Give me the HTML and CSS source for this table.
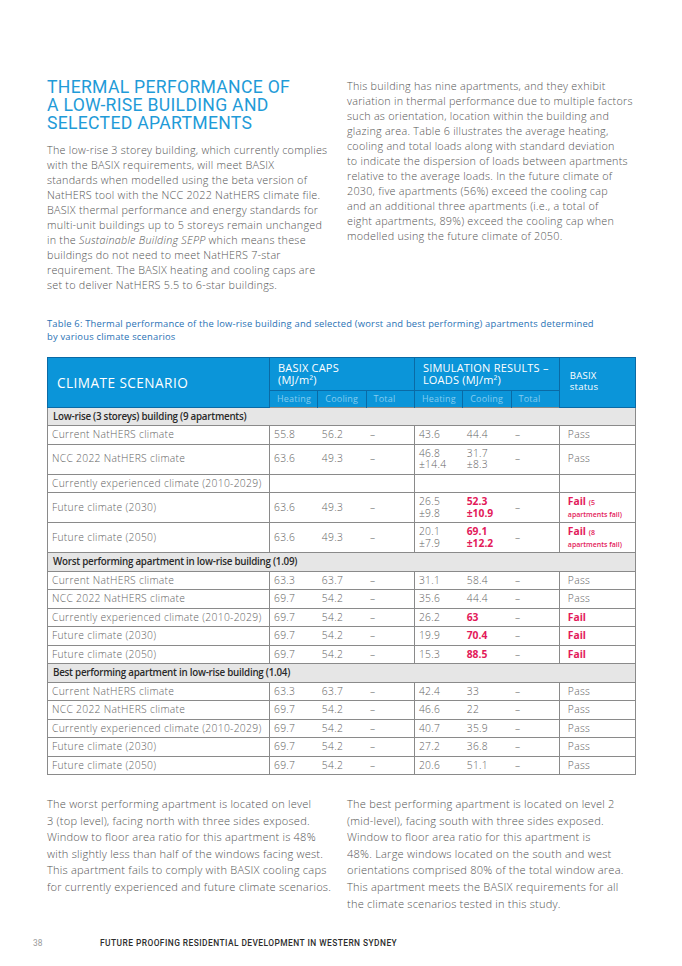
FILE: index.html
```html
<!DOCTYPE html>
<html lang="en">
<head>
<meta charset="utf-8">
<title>Thermal performance of a low-rise building</title>
<link rel="stylesheet" href="styles.css">
</head>
<body>
<div class="page">
  <section class="cols intro">
    <div class="col">
      <h1 class="title">THERMAL PERFORMANCE OF<br>A LOW-RISE BUILDING AND<br>SELECTED APARTMENTS</h1>
      <p class="text">The low-rise 3 storey building, which currently complies<br>with the BASIX requirements, will meet BASIX<br>standards when modelled using the beta version of<br>NatHERS tool with the NCC 2022 NatHERS climate file.<br>BASIX thermal performance and energy standards for<br>multi-unit buildings up to 5 storeys remain unchanged<br>in the <em>Sustainable Building SEPP</em> which means these<br>buildings do not need to meet NatHERS 7-star<br>requirement. The BASIX heating and cooling caps are<br>set to deliver NatHERS 5.5 to 6-star buildings.</p>
    </div>
    <div class="col">
      <p class="text">This building has nine apartments, and they exhibit<br>variation in thermal performance due to multiple factors<br>such as orientation, location within the building and<br>glazing area. Table 6 illustrates the average heating,<br>cooling and total loads along with standard deviation<br>to indicate the dispersion of loads between apartments<br>relative to the average loads. In the future climate of<br>2030, five apartments (56%) exceed the cooling cap<br>and an additional three apartments (i.e., a total of<br>eight apartments, 89%) exceed the cooling cap when<br>modelled using the future climate of 2050.</p>
    </div>
  </section>

  <p class="caption">Table 6: Thermal performance of the low-rise building and selected (worst and best performing) apartments determined<br>by various climate scenarios</p>

  <table class="data">
    <colgroup>
      <col class="c-scn"><col class="c-num"><col class="c-num"><col class="c-num"><col class="c-num"><col class="c-num"><col class="c-num"><col class="c-st">
    </colgroup>
    <thead>
      <tr class="h1">
        <th rowspan="2" class="h-scn">CLIMATE SCENARIO</th>
        <th colspan="3" class="h-grp">BASIX CAPS<br>(MJ/m²)</th>
        <th colspan="3" class="h-grp">SIMULATION RESULTS –<br>LOADS (MJ/m²)</th>
        <th rowspan="2" class="h-st">BASIX<br>status</th>
      </tr>
      <tr class="h2">
        <th>Heating</th><th>Cooling</th><th class="end">Total</th>
        <th>Heating</th><th>Cooling</th><th class="end">Total</th>
      </tr>
    </thead>
    <tbody>
      <tr class="grp"><td colspan="8">Low-rise (3 storeys) building (9 apartments)</td></tr>
      <tr><td class="scn">Current NatHERS climate</td><td>55.8</td><td>56.2</td><td class="end">–</td><td>43.6</td><td>44.4</td><td class="end">–</td><td class="st">Pass</td></tr>
      <tr><td class="scn">NCC 2022 NatHERS climate</td><td>63.6</td><td>49.3</td><td class="end">–</td><td>46.8<br>±14.4</td><td>31.7<br>±8.3</td><td class="end">–</td><td class="st">Pass</td></tr>
      <tr><td class="scn">Currently experienced climate (2010-2029)</td><td></td><td></td><td class="end"></td><td></td><td></td><td class="end"></td><td class="st"></td></tr>
      <tr><td class="scn">Future climate (2030)</td><td>63.6</td><td>49.3</td><td class="end">–</td><td>26.5<br>±9.8</td><td class="fail">52.3<br>±10.9</td><td class="end">–</td><td class="st fail">Fail <span class="note">(5<br>apartments fail)</span></td></tr>
      <tr><td class="scn">Future climate (2050)</td><td>63.6</td><td>49.3</td><td class="end">–</td><td>20.1<br>±7.9</td><td class="fail">69.1<br>±12.2</td><td class="end">–</td><td class="st fail">Fail <span class="note">(8<br>apartments fail)</span></td></tr>

      <tr class="grp"><td colspan="8">Worst performing apartment in low-rise building (1.09)</td></tr>
      <tr><td class="scn">Current NatHERS climate</td><td>63.3</td><td>63.7</td><td class="end">–</td><td>31.1</td><td>58.4</td><td class="end">–</td><td class="st">Pass</td></tr>
      <tr><td class="scn">NCC 2022 NatHERS climate</td><td>69.7</td><td>54.2</td><td class="end">–</td><td>35.6</td><td>44.4</td><td class="end">–</td><td class="st">Pass</td></tr>
      <tr><td class="scn">Currently experienced climate (2010-2029)</td><td>69.7</td><td>54.2</td><td class="end">–</td><td>26.2</td><td class="fail">63</td><td class="end">–</td><td class="st fail">Fail</td></tr>
      <tr><td class="scn">Future climate (2030)</td><td>69.7</td><td>54.2</td><td class="end">–</td><td>19.9</td><td class="fail">70.4</td><td class="end">–</td><td class="st fail">Fail</td></tr>
      <tr><td class="scn">Future climate (2050)</td><td>69.7</td><td>54.2</td><td class="end">–</td><td>15.3</td><td class="fail">88.5</td><td class="end">–</td><td class="st fail">Fail</td></tr>

      <tr class="grp"><td colspan="8">Best performing apartment in low-rise building (1.04)</td></tr>
      <tr><td class="scn">Current NatHERS climate</td><td>63.3</td><td>63.7</td><td class="end">–</td><td>42.4</td><td>33</td><td class="end">–</td><td class="st">Pass</td></tr>
      <tr><td class="scn">NCC 2022 NatHERS climate</td><td>69.7</td><td>54.2</td><td class="end">–</td><td>46.6</td><td>22</td><td class="end">–</td><td class="st">Pass</td></tr>
      <tr><td class="scn">Currently experienced climate (2010-2029)</td><td>69.7</td><td>54.2</td><td class="end">–</td><td>40.7</td><td>35.9</td><td class="end">–</td><td class="st">Pass</td></tr>
      <tr><td class="scn">Future climate (2030)</td><td>69.7</td><td>54.2</td><td class="end">–</td><td>27.2</td><td>36.8</td><td class="end">–</td><td class="st">Pass</td></tr>
      <tr><td class="scn">Future climate (2050)</td><td>69.7</td><td>54.2</td><td class="end">–</td><td>20.6</td><td>51.1</td><td class="end">–</td><td class="st">Pass</td></tr>
    </tbody>
  </table>

  <section class="cols outro">
    <p class="text">The worst performing apartment is located on level<br>3 (top level), facing north with three sides exposed.<br>Window to floor area ratio for this apartment is 48%<br>with slightly less than half of the windows facing west.<br>This apartment fails to comply with BASIX cooling caps<br>for currently experienced and future climate scenarios.</p>
    <p class="text">The best performing apartment is located on level 2<br>(mid-level), facing south with three sides exposed.<br>Window to floor area ratio for this apartment is<br>48%. Large windows located on the south and west<br>orientations comprised 80% of the total window area.<br>This apartment meets the BASIX requirements for all<br>the climate scenarios tested in this study.</p>
  </section>

  <footer class="foot">
    <span class="pg">38</span>
    <span class="doc">FUTURE PROOFING RESIDENTIAL DEVELOPMENT IN WESTERN SYDNEY</span>
  </footer>
</div>
</body>
</html>
```

FILE: styles.css
```css
html, body {
  margin: 0;
  padding: 0;
  background: #ffffff;
}

.page {
  width: 682px;
  height: 966px;
  box-sizing: border-box;
  padding: 78px 46px 0 47px;
  font-family: "Open Sans", "Liberation Sans", sans-serif;
  color: #5a5a5a;
}

.cols {
  display: grid;
  grid-template-columns: 283px 285px;
  column-gap: 17px;
}

.title {
  margin: 0;
  font-family: Roboto, "Liberation Sans", sans-serif;
  font-weight: 400;
  font-size: 17.6px;
  line-height: 18px;
  letter-spacing: 0.3px;
  color: #1f9bd8;
}

.text {
  margin: 0;
  font-size: 10.8px;
  line-height: 15px;
  font-weight: 300;
  letter-spacing: 0.24px;
  color: #555555;
  white-space: nowrap;
}

.intro .title + .text {
  margin-top: 10px;
}

.caption {
  margin: 25px 0 0;
  font-size: 9.4px;
  line-height: 13px;
  letter-spacing: 0.2px;
  color: #2a72b5;
  white-space: nowrap;
}

.data {
  margin-top: 14px;
  width: 588px;
  border-collapse: collapse;
  table-layout: fixed;
  font-size: 10.3px;
  letter-spacing: 0.3px;
  color: #636363;
}

.c-scn { width: 222px; }
.c-num { width: 48.3px; }
.c-st { width: 76px; }

.data th {
  background: #0b95d9;
  color: #ffffff;
  font-weight: 400;
  text-align: left;
  vertical-align: top;
  border: 1px solid #0a6aa5;
  letter-spacing: 0.2px;
}

.data .h1 th {
  height: 33px;
  box-sizing: border-box;
}

.h-scn {
  font-size: 13.6px;
  padding: 0 0 0 9px;
  vertical-align: middle !important;
  letter-spacing: 0.45px !important;
}

.h-grp {
  font-size: 11px;
  line-height: 12px;
  padding: 3.5px 6px 0 8px;
}

.h-st {
  font-size: 9.6px;
  line-height: 11.5px;
  padding: 0 0 2px 10px;
  vertical-align: middle !important;
}

.data .h2 th {
  font-size: 9px;
  line-height: 15.5px;
  padding: 0 0 0 7px;
  color: #86ccef;
  border-top: none;
  border-bottom: none;
}

.data td {
  padding: 3px 4px;
  line-height: 11.5px;
  vertical-align: middle;
  border-bottom: 1px solid #8a8a8a;
  font-weight: 300;
  white-space: nowrap;
  overflow: hidden;
}

.data td.scn {
  border-left: 1px solid #8a8a8a;
  border-right: 1px solid #8a8a8a;
  padding-left: 4px;
}

.data td.end { border-right: 1px solid #8a8a8a; }

.data td.st {
  border-right: 1px solid #8a8a8a;
  padding-left: 8px;
}

.data .grp td {
  background: #e6e6e6;
  color: #2a2a2a;
  font-size: 9.8px;
  font-weight: 600;
  letter-spacing: -0.25px;
  border: 1px solid #8a8a8a;
  padding-left: 5px;
}

.data td.fail {
  color: #e3195a;
  font-weight: 700;
  letter-spacing: 0;
}

.note {
  font-size: 7px;
  line-height: 9px;
  font-weight: 600;
}

.outro {
  margin-top: 21px;
}

.outro .text {
  font-size: 11.1px;
  line-height: 16.6px;
  letter-spacing: 0.2px;
}

.foot {
  display: flex;
  align-items: center;
  margin: 26px 0 0 -14px;
  font-family: Roboto, "Liberation Sans", sans-serif;
  font-size: 8.4px;
  line-height: 10px;
}

.pg {
  width: 67px;
  color: #9a9a9a;
}

.doc {
  color: #2d2d2d;
  font-weight: 500;
  letter-spacing: 0.45px;
}
```
